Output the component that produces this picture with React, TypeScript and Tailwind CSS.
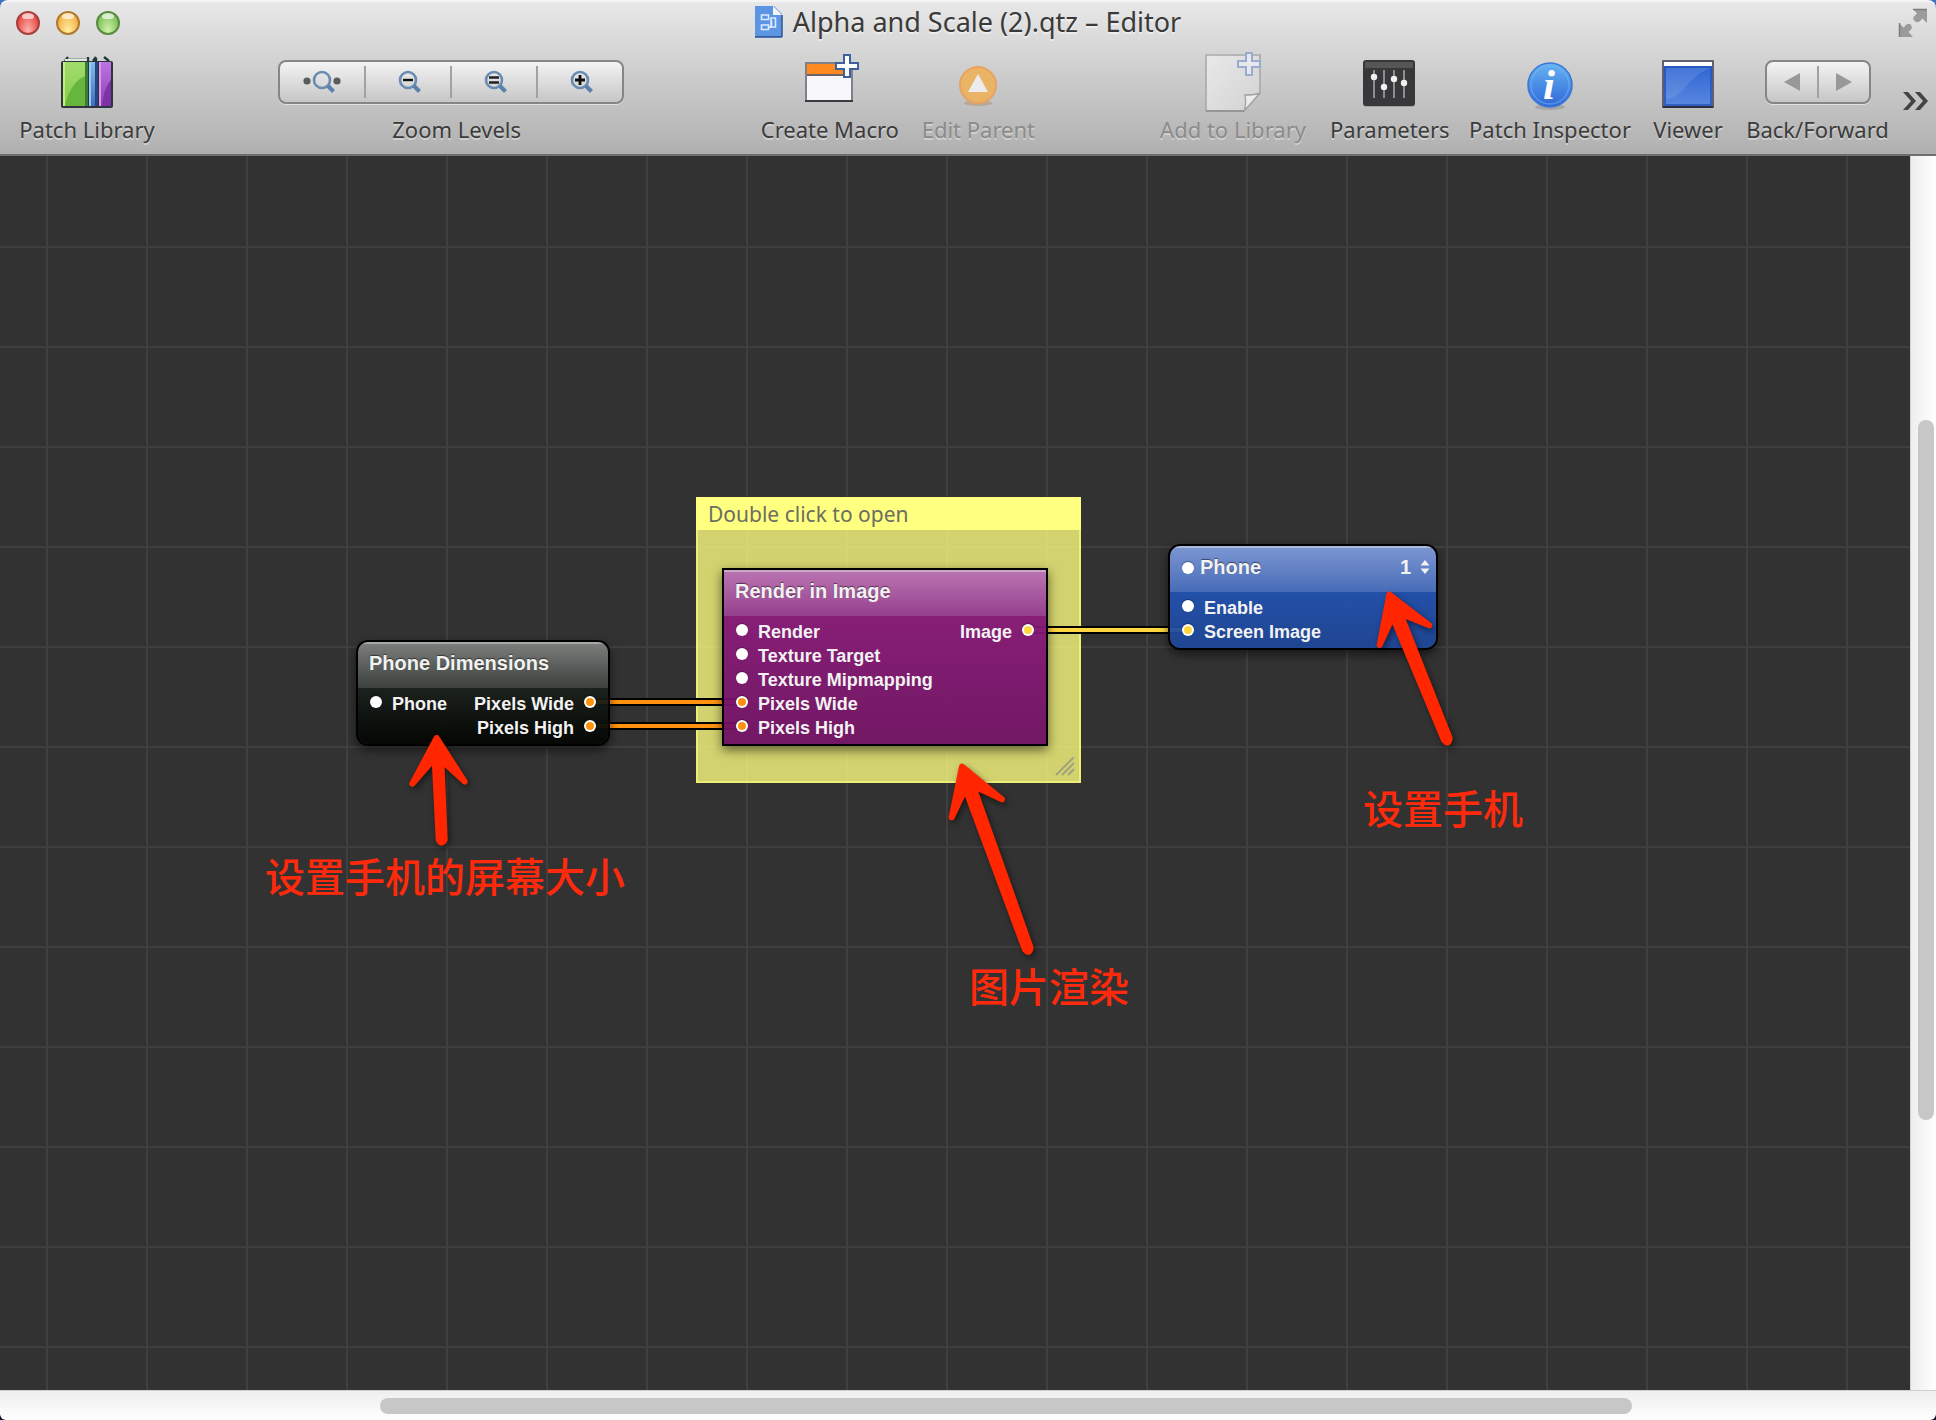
import type { ReactNode } from 'react';

const LABEL =
  "block h-7 w-full text-center text-[22px] leading-[26px] whitespace-nowrap font-['Noto_Sans',sans-serif] [text-shadow:0_2px_0_rgba(255,255,255,0.4)]";

function ToolButton({
  label,
  width,
  disabled,
  children,
}: {
  label: string;
  width: string;
  disabled?: boolean;
  children: ReactNode;
}) {
  return (
    <button
      type="button"
      disabled={disabled}
      className={`flex shrink-0 flex-col items-center ${width} ${disabled ? 'text-[#8b8b8b]' : 'text-[#3c3c3c]'}`}
    >
      <span className="flex h-[72px] items-center">{children}</span>
      <span className={LABEL}>{label}</span>
    </button>
  );
}

function BooksIcon() {
  return (
    <svg width="60" height="72" viewBox="58 44 60 72" aria-hidden="true">
      <defs>
        <linearGradient id="bookGreen" x1="0" y1="0" x2="0" y2="1">
          <stop offset="0" stopColor="#a2dc6c" />
          <stop offset="1" stopColor="#86cb4e" />
        </linearGradient>
        <linearGradient id="bookBlue" x1="0" y1="0" x2="0" y2="1">
          <stop offset="0" stopColor="#83bdec" />
          <stop offset="1" stopColor="#3c6fc0" />
        </linearGradient>
        <linearGradient id="bookPurple" x1="0" y1="0" x2="0" y2="1">
          <stop offset="0" stopColor="#bd74e0" />
          <stop offset="1" stopColor="#9040b8" />
        </linearGradient>
      </defs>
      <path d="M66 61l3-4M70 60h17M89 61v-4M94 61l3-4M97 61v-3M105 57l5 4" stroke="#1f3a36" strokeWidth="2.4" fill="none" />
      <rect x="66" y="59" width="22" height="2" fill="#dfe8dc" />
      <rect x="62" y="61" width="52" height="47" rx="2" fill="#2e3440" />
      <rect x="64" y="62" width="22" height="44" fill="url(#bookGreen)" />
      <path d="M86 76c-8 3-17 14-20 30h20z" fill="#66b53c" />
      <rect x="64" y="62" width="2" height="44" fill="#c6ee7a" />
      <rect x="86" y="62" width="3" height="44" fill="#3f7a36" />
      <rect x="90" y="62" width="7" height="44" fill="url(#bookBlue)" />
      <rect x="90" y="62" width="2" height="44" fill="#8fd0f2" />
      <rect x="96" y="62" width="3" height="44" fill="#2c447c" />
      <rect x="100" y="62" width="12" height="44" fill="url(#bookPurple)" />
      <path d="M112 80c-5 6-8 14-9 26h9z" fill="#7d33a6" />
      <rect x="100" y="62" width="2" height="44" fill="#d79af0" />
    </svg>
  );
}

function Magnifier({ kind }: { kind: 'fit' | 'out' | 'actual' | 'in' }) {
  return (
    <svg width="40" height="24" viewBox="-10 0 40 24" fill="none" aria-hidden="true">
      <circle cx="10" cy="10" r="8" stroke="#6a8cb2" strokeWidth="2.6" />
      <path d="M16 16l5.5 5.5" stroke="#5a81ac" strokeWidth="4" />
      {kind === 'fit' && (
        <g fill="#5c5c5c">
          <circle cx="-5" cy="11" r="3.6" />
          <circle cx="25" cy="11" r="3.6" />
        </g>
      )}
      {kind === 'out' && <path d="M5 10h10" stroke="#111" strokeWidth="2.4" />}
      {kind === 'actual' && <path d="M5 7.5h10M5 12.5h10" stroke="#222" strokeWidth="2.4" />}
      {kind === 'in' && <path d="M5 10h10M10 5v10" stroke="#111" strokeWidth="2.8" />}
    </svg>
  );
}

const SEGMENTS = 'flex h-11 rounded-[8px] border-2 border-[#868686] bg-linear-to-b from-[#f4f4f4] to-[#c6c6c6] shadow-[0_1px_0_rgba(255,255,255,0.5)]';

function PlusBadge({ x, y, faded }: { x: number; y: number; faded?: boolean }) {
  return (
    <path
      transform={`translate(${x} ${y})`}
      d="M-3-11h6v8h8v6h-8v8h-6v-8h-8v-6h8z"
      fill={faded ? '#e6e8ec' : '#ffffff'}
      stroke={faded ? '#9aabcd' : '#3f5f9f'}
      strokeWidth="2"
    />
  );
}

function MacroIcon() {
  return (
    <svg width="60" height="72" viewBox="801 44 60 72" aria-hidden="true">
      <rect x="806" y="62" width="48" height="40" fill="#7f8389" />
      <rect x="806" y="100" width="48" height="2" fill="#3c3c40" />
      <rect x="808" y="64" width="44" height="10" fill="#ff8a1f" />
      <rect x="808" y="74" width="44" height="2" fill="#6c6468" />
      <rect x="808" y="76" width="44" height="24" fill="#f8f8fc" />
      <PlusBadge x={848} y={66} />
    </svg>
  );
}

function ParentIcon() {
  return (
    <svg width="50" height="72" viewBox="956 44 50 72" aria-hidden="true">
      <ellipse cx="981" cy="103" rx="14" ry="3" fill="#b09878" opacity="0.6" />
      <circle cx="981" cy="85" r="18" fill="#e9b465" stroke="#e8a261" strokeWidth="2" />
      <path d="M981 74l10 18h-20z" fill="#ececec" />
    </svg>
  );
}

function LibraryIcon() {
  return (
    <svg width="64" height="72" viewBox="1202 44 64 72" aria-hidden="true">
      <defs>
        <linearGradient id="sheet" x1="0" y1="0" x2="1" y2="1">
          <stop offset="0" stopColor="#e9e9e9" />
          <stop offset="1" stopColor="#d2d2d2" />
        </linearGradient>
      </defs>
      <path d="M1207 55h54v38l-16 18h-38z" fill="url(#sheet)" stroke="#a9a9a9" strokeWidth="1.6" />
      <path d="M1207 111h38" stroke="#8c8c8c" strokeWidth="1.6" />
      <path d="M1261 93c-4 2-9 2-15 2 1 6 1 11-1 16z" fill="#ededed" stroke="#a4a4a4" strokeWidth="1.4" />
      <PlusBadge x={1250} y={64} faded />
    </svg>
  );
}

function SlidersIcon() {
  return (
    <svg width="56" height="72" viewBox="1362 44 56 72" aria-hidden="true">
      <rect x="1364" y="61" width="52" height="46" rx="3" fill="#8d8d8d" opacity="0.6" />
      <rect x="1364" y="60" width="52" height="46" rx="3" fill="#38383b" />
      <path d="M1366 62h48v6h-48z" fill="#565656" />
      <path d="M1375 70v28M1385 70v28M1395 70v28M1405 70v28" stroke="#8d8d8d" strokeWidth="2" />
      <g fill="#f0f0f0">
        <circle cx="1375" cy="77" r="3.2" />
        <circle cx="1385" cy="87" r="3.2" />
        <circle cx="1395" cy="79" r="3.2" />
        <circle cx="1405" cy="83" r="3.2" />
      </g>
    </svg>
  );
}

function InfoIcon() {
  return (
    <svg width="52" height="72" viewBox="1525 44 52 72" aria-hidden="true">
      <defs>
        <linearGradient id="info" x1="0" y1="0" x2="0" y2="1">
          <stop offset="0" stopColor="#66b4f2" />
          <stop offset="1" stopColor="#2f66d8" />
        </linearGradient>
      </defs>
      <ellipse cx="1551" cy="107" rx="15" ry="3" fill="#808080" opacity="0.4" />
      <circle cx="1551" cy="85" r="22" fill="url(#info)" stroke="#3a78d8" strokeWidth="1.5" />
      <circle cx="1551" cy="85" r="19" fill="none" stroke="#7ab8f4" strokeOpacity="0.5" strokeWidth="1.5" />
      <text
        x="1550"
        y="99"
        textAnchor="middle"
        fontSize="43"
        fontWeight="700"
        fontStyle="italic"
        fontFamily="'Liberation Serif', serif"
        fill="#fff"
      >
        i
      </text>
    </svg>
  );
}

function ViewerIcon() {
  return (
    <svg width="56" height="72" viewBox="1660 44 56 72" aria-hidden="true">
      <defs>
        <linearGradient id="viewer" x1="0" y1="0" x2="0" y2="1">
          <stop offset="0" stopColor="#2f66d4" />
          <stop offset="1" stopColor="#5a88e0" />
        </linearGradient>
      </defs>
      <rect x="1662" y="60" width="52" height="48" rx="1" fill="#5b616e" />
      <rect x="1664" y="62" width="48" height="4" fill="#fff" />
      <rect x="1664" y="66" width="48" height="40" fill="url(#viewer)" />
      <path d="M1710 68c-10 4-20 12-27 22-5 5-10 8-17 9V68z" fill="#fff" opacity="0.1" />
      <rect x="1665" y="67" width="46" height="38" fill="none" stroke="#2456b8" strokeWidth="1.5" />
      <rect x="1663" y="106" width="50" height="2" fill="#2a3044" />
    </svg>
  );
}

function TrafficLight({ label, colors }: { label: string; colors: string }) {
  return (
    <button type="button" aria-label={label} className={`relative size-6 overflow-hidden rounded-full border-2 bg-radial-[at_50%_90%] ${colors}`}>
      <span className="absolute top-0 left-1 h-1.5 w-3 rounded-full bg-white/65" />
    </button>
  );
}

function Port({ color }: { color?: string }) {
  return (
    <span className="mb-1 flex size-3 shrink-0 items-center justify-center rounded-full bg-white shadow-[0_-1px_1px_rgba(0,0,0,0.35)]">
      {color && <span className={`size-2 rounded-full ${color}`} />}
    </span>
  );
}

type PortInfo = { name: string; color?: string };

function PatchNode({
  place,
  frame,
  head,
  body,
  title,
  header,
  inputs,
  outputs,
}: {
  place: string;
  frame: string;
  head: string;
  body: string;
  title: string;
  header?: (title: ReactNode) => ReactNode;
  inputs: PortInfo[];
  outputs: PortInfo[];
}) {
  const heading = <h2 className="text-[20px] leading-6 font-bold [text-shadow:0_-1px_1px_rgba(0,0,0,0.5)]">{title}</h2>;
  return (
    <section
      className={`absolute overflow-hidden border-2 border-black font-['Liberation_Sans',sans-serif] text-[#f2f2f2] shadow-[0_4px_10px_rgba(0,0,0,0.55)] ${place} ${frame}`}
    >
      <div className={`flex h-[46px] items-center border-t-2 pb-1.5 ${head}`}>{header ? header(heading) : <div className="px-[11px]">{heading}</div>}</div>
      <div className={`flex justify-between px-3 py-1 text-[18px] leading-6 font-bold ${body}`}>
        <ul>
          {inputs.map((p) => (
            <li key={p.name} className="flex h-6 items-center gap-[10px]">
              <Port color={p.color} />
              {p.name}
            </li>
          ))}
        </ul>
        <ul>
          {outputs.map((p) => (
            <li key={p.name} className="flex h-6 items-center justify-end gap-[10px]">
              {p.name}
              <Port color={p.color} />
            </li>
          ))}
        </ul>
      </div>
    </section>
  );
}

function Wire({ place, color }: { place: string; color: string }) {
  return <div className={`absolute h-2 border-y-2 border-black ${place} ${color}`} />;
}

function Arrow({ place, viewBox, d }: { place: string; viewBox: string; d: string }) {
  return (
    <svg className={`absolute drop-shadow-[2px_3px_3px_rgba(0,0,0,0.5)] ${place}`} viewBox={viewBox} aria-hidden="true">
      <path d={d} fill="#ff2600" stroke="#ff2600" strokeWidth="18" strokeLinejoin="round" />
    </svg>
  );
}

function Note({ place, children }: { place: string; children: string }) {
  return (
    <p lang="zh" className={`absolute text-[40px] leading-[48px] font-medium whitespace-nowrap text-[#ff2a0c] font-['Noto_Sans_CJK_SC',sans-serif] ${place}`}>
      {children}
    </p>
  );
}

export default function App() {
  return (
    <div className="flex min-h-screen flex-col bg-linear-to-b from-[#3f74c4] to-[#0d0b2c]">
      <header className="rounded-t-[8px] border-t-2 border-b-2 border-t-[#f5f5f5] border-b-[#6e6e6e] bg-linear-to-b from-[#e8e8e8] to-[#b0b0b0] pb-[10px]">
        <div className="grid h-[42px] grid-cols-[1fr_auto_1fr] items-center px-2">
          <div className="flex gap-4 pl-2">
            <TrafficLight label="Close" colors="border-[#a8403c] from-[#ffb4ae] to-[#e02f2c]" />
            <TrafficLight label="Minimize" colors="border-[#b07a2c] from-[#fff0a0] to-[#ee9e30]" />
            <TrafficLight label="Zoom" colors="border-[#5a8a40] from-[#d0f4a8] to-[#68b048]" />
          </div>
          <h1 className="flex items-center gap-[10px] pb-0.5 text-[27px] leading-8 whitespace-nowrap text-[#3a3a3a] font-['Noto_Sans',sans-serif] [text-shadow:0_2px_0_rgba(255,255,255,0.5)]">
            <svg width="28" height="32" viewBox="0 0 28 32" aria-hidden="true">
              <path d="M0 0h19l8 8v24H0z" fill="#5b95e4" />
              <path d="M18 0l9 9h-9z" fill="#f4f6fa" />
              <path d="M27 9v22M0 30.8h27" stroke="#3a5a90" strokeWidth="1.6" />
              <path d="M6.5 9h7v4.5h-7zM6.5 19h7v4.5h-7zM13.5 21.3h3v-7M16 12h4.5v9H16z" fill="none" stroke="#dcebff" strokeWidth="1.6" />
            </svg>
            Alpha and Scale (2).qtz – Editor
          </h1>
          <button type="button" aria-label="Enter full screen" className="justify-self-end">
            <svg width="30" height="30" viewBox="0 0 30 30" fill="#9b9b9b" aria-hidden="true">
              <path d="M15 1h14v14l-4.500-4.500-3 3q-3 1.500-5-.5t-1-4l3.500-3.500z" />
              <path d="M1 15l4.500 4.500 3-3q3-1.500 4.500.5t.5 4l-3 3L15 29H1z" />
              <path d="M15 1.500h14M1.500 15v14" stroke="#7c7c7c" strokeWidth="1.5" />
            </svg>
          </button>
        </div>

        <div className="flex items-end pr-[7px] pl-[18px]">
          <ToolButton label="Patch Library" width="w-[138px]">
            <BooksIcon />
          </ToolButton>
          <div className="flex-1" />
          <div role="group" aria-labelledby="zoom-label" className="w-[358px] shrink-0 text-[#3c3c3c]">
            <div className="flex h-[72px] items-center pt-1">
              <div className={`${SEGMENTS} w-[346px] divide-x-2 divide-[#a2a2a2]`}>
                {(['fit', 'out', 'actual', 'in'] as const).map((kind) => (
                  <button key={kind} type="button" aria-label={`Zoom ${kind}`} className="my-1 flex flex-1 items-center justify-center">
                    <Magnifier kind={kind} />
                  </button>
                ))}
              </div>
            </div>
            <span id="zoom-label" className={LABEL}>
              Zoom Levels
            </span>
          </div>
          <div className="flex-1" />
          <div className="flex gap-[21px] pl-0.5">
            <ToolButton label="Create Macro" width="w-[141px]">
              <MacroIcon />
            </ToolButton>
            <ToolButton label="Edit Parent" width="w-[114px]" disabled>
              <ParentIcon />
            </ToolButton>
          </div>
          <div className="flex-1" />
          <div className="flex gap-[21px]">
            <ToolButton label="Add to Library" width="w-[152px]" disabled>
              <LibraryIcon />
            </ToolButton>
            <ToolButton label="Parameters" width="w-[118px]">
              <SlidersIcon />
            </ToolButton>
            <ToolButton label="Patch Inspector" width="w-[162px]">
              <InfoIcon />
            </ToolButton>
            <ToolButton label="Viewer" width="w-[72px]">
              <ViewerIcon />
            </ToolButton>
            <div role="group" aria-labelledby="nav-label" className="flex w-[145px] shrink-0 flex-col items-center text-[#3c3c3c]">
              <div className="flex h-[72px] items-center pt-1">
                <div className={`${SEGMENTS} w-[106px] divide-x-2 divide-[#a2a2a2]`}>
                  <button type="button" aria-label="Back" className="my-1 flex flex-1 items-center justify-center">
                    <svg width="18" height="20" viewBox="0 0 18 20" aria-hidden="true">
                      <path d="M17 1v18L1 10z" fill="#989898" />
                    </svg>
                  </button>
                  <button type="button" aria-label="Forward" className="my-1 flex flex-1 items-center justify-center">
                    <svg width="18" height="20" viewBox="0 0 18 20" aria-hidden="true">
                      <path d="M1 1v18l16-9z" fill="#989898" />
                    </svg>
                  </button>
                </div>
              </div>
              <span id="nav-label" className={LABEL}>
                Back/Forward
              </span>
            </div>
          </div>
          <button type="button" aria-label="More toolbar items" className="mb-[34px] ml-3">
            <svg width="27" height="18" viewBox="0 0 27 18" fill="#444" aria-hidden="true">
              <path d="M1 0h5l8 9-8 9H1l8-9z" />
              <path d="M13 0h5l8 9-8 9h-5l8-9z" />
            </svg>
          </button>
        </div>
      </header>

      <div className="flex flex-1">
        <main
          id="canvas"
          className="relative flex-1 overflow-hidden bg-[#323232] bg-[linear-gradient(to_right,#3f3f3f_2px,transparent_2px),linear-gradient(to_bottom,#3f3f3f_2px,transparent_2px)] bg-size-[100px_100px] bg-position-[46px_90px]"
        >
          <aside className="absolute top-[341px] left-[696px] h-[286px] w-[385px] border-2 border-[#eeee77] bg-[#ffff80]/78">
            <h2 className="-mx-[2px] -mt-[2px] h-[33px] bg-[#ffff80] px-3 text-[21px] leading-[34px] text-[#6d6d62] font-['Noto_Sans',sans-serif]">
              Double click to open
            </h2>
            <svg className="absolute right-1 bottom-1" width="20" height="20" viewBox="0 0 20 20" aria-hidden="true">
              <path d="M1 18L19 0M7 18L19 6M13 18l6-6" stroke="#a2a27c" strokeWidth="2" />
            </svg>
          </aside>

          <Wire place="top-[542px] left-[590px] w-[152px]" color="bg-[#ff9310]" />
          <Wire place="top-[566px] left-[590px] w-[152px]" color="bg-[#ff9310]" />
          <Wire place="top-[470px] left-[1028px] w-[160px]" color="bg-[#ffd640]" />

          <PatchNode
            place="top-[484px] left-[356px] w-[254px]"
            frame="rounded-[12px]"
            head="border-[#a5a8a5] bg-linear-to-b from-[#7b7d7b] to-[#3c413e]"
            body="bg-linear-to-b from-[#1a201b]/92 to-[#040604]/96"
            title="Phone Dimensions"
            inputs={[{ name: 'Phone' }]}
            outputs={[
              { name: 'Pixels Wide', color: 'bg-[#ff9310]' },
              { name: 'Pixels High', color: 'bg-[#ff9310]' },
            ]}
          />
          <PatchNode
            place="top-[412px] left-[722px] w-[326px]"
            frame=""
            head="border-[#c9a9c6] bg-linear-to-b from-[#b973b1] to-[#95408d]"
            body="bg-linear-to-b from-[#841777]/96 to-[#6e1064]/96"
            title="Render in Image"
            inputs={[
              { name: 'Render' },
              { name: 'Texture Target' },
              { name: 'Texture Mipmapping' },
              { name: 'Pixels Wide', color: 'bg-[#ff9310]' },
              { name: 'Pixels High', color: 'bg-[#ff9310]' },
            ]}
            outputs={[{ name: 'Image', color: 'bg-[#ffd640]' }]}
          />
          <PatchNode
            place="top-[388px] left-[1168px] w-[270px]"
            frame="rounded-[12px]"
            head="border-[#aab9dd] bg-linear-to-b from-[#7b95d1] to-[#476cb7]"
            body="bg-linear-to-b from-[#2252b0]/94 to-[#1e4798]/94"
            title="Phone"
            header={(heading) => (
              <div className="flex flex-1 items-center pr-[5px] pl-3">
                <span className="flex pt-1.5">
                  <Port />
                </span>
                <div className="ml-[6px] flex-1">{heading}</div>
                <span className="text-[20px] leading-6 font-bold">1</span>
                <button type="button" aria-label="Change layer" className="ml-2">
                  <svg width="12" height="16" viewBox="0 0 12 16" fill="#f2f2f2" aria-hidden="true">
                    <path d="M6 1l4.500 5.500h-9zM6 15l4.500-5.500h-9z" />
                  </svg>
                </button>
              </div>
            )}
            inputs={[{ name: 'Enable' }, { name: 'Screen Image', color: 'bg-[#ffd640]' }]}
            outputs={[]}
          />

          <Arrow
            place="top-[571px] left-[400px] h-[130px] w-[80px]"
            viewBox="180 321 240 390"
            d="M290 354L217 491 284 415 296 659Q305 677 314 659L304 420 374 485Z"
          />
          <Arrow
            place="top-[599px] left-[940px] h-[210px] w-[110px]"
            viewBox="120 45 330 630"
            d="M186 80L155 232 196 147 375 629Q388 645 392 623L219 137 306 178Z"
          />
          <Arrow
            place="top-[427px] left-[1368px] h-[180px] w-[100px]"
            viewBox="984 159 300 540"
            d="M1048 194L1019 345 1058 261 1212 630Q1226 647 1229 624L1081 251 1168 286Z"
          />

          <Note place="top-[695px] left-[265px]">设置手机的屏幕大小</Note>
          <Note place="top-[805px] left-[969px]">图片渲染</Note>
          <Note place="top-[627px] left-[1363px]">设置手机</Note>
        </main>
        <div role="scrollbar" aria-orientation="vertical" aria-controls="canvas" aria-valuenow={49} className="flex w-[26px] flex-col border-l border-[#d0d0d0] bg-linear-to-r from-[#eeeeee] to-white pr-0.5 pl-[7px]">
          <div className="flex-[264]" />
          <div className="flex-[700] rounded-full bg-[#c7c7c7]" />
          <div className="flex-[270]" />
        </div>
      </div>
      <div role="scrollbar" aria-orientation="horizontal" aria-controls="canvas" aria-valuenow={55} className="flex h-[30px] rounded-b-[6px] border-t border-[#d0d0d0] bg-linear-to-b from-[#eeeeee] to-white pt-[7px] pb-1.5">
        <div className="flex-[380]" />
        <div className="flex-[1252] rounded-full bg-[#c7c7c7]" />
        <div className="flex-[304]" />
      </div>
    </div>
  );
}
